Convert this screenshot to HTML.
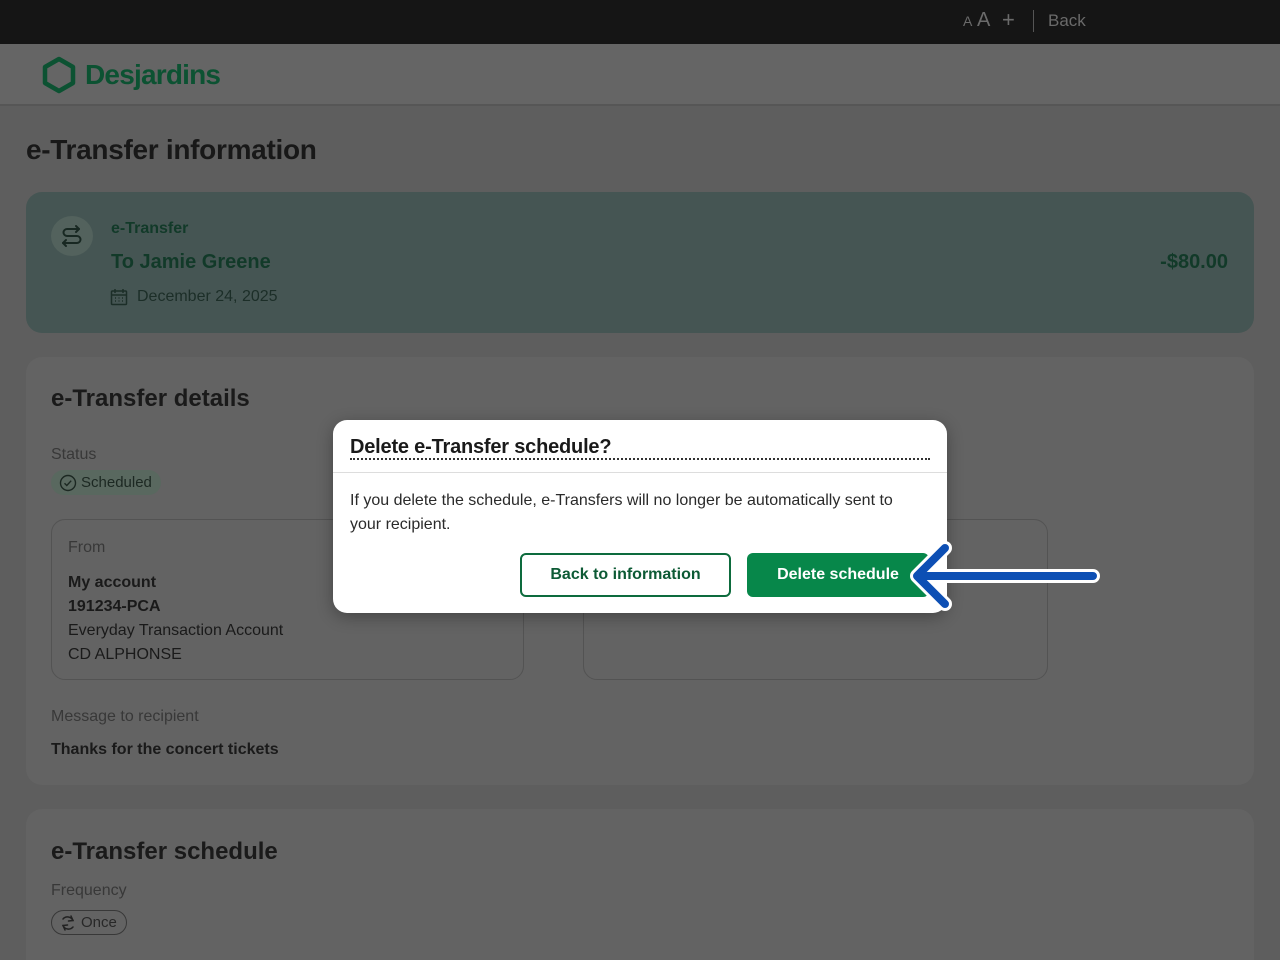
<!DOCTYPE html>
<html><head><meta charset="utf-8"><style>
*{box-sizing:border-box;margin:0;padding:0}
html,body{width:1280px;height:960px;overflow:hidden}
body{background:#5e5e5e;font-family:"Liberation Sans",sans-serif;color:#1a1a1a;position:relative}
.top{height:44px;background:#151515;position:relative}
.top span{position:absolute;color:#6a6a6a}
.hdr{height:62px;background:#656565;border-bottom:2px solid #565656;position:relative}
.logo{position:absolute;left:41px;top:56px}
h1{position:absolute;left:26px;top:134px;font-size:28px;font-weight:bold;color:#181818;letter-spacing:-0.3px}
.tcard{position:absolute;left:26px;top:192px;width:1228px;height:141px;background:#455553;border-radius:16px}
.card{position:absolute;left:26px;background:#636363;border-radius:16px;width:1228px}
.abs{position:absolute;white-space:nowrap}
.g{color:#123a29}
.lbl{color:#383838;font-size:16px}
.box{position:absolute;border:1px solid #535353;border-radius:14px}
.modal{position:absolute;left:333px;top:420px;width:614px;height:193px;background:#fff;border-radius:14px;box-shadow:0 4px 16px rgba(0,0,0,.3)}
.btn{position:absolute;top:133px;height:44px;border-radius:6px;font-weight:bold;font-size:16px;display:flex;align-items:center;justify-content:center}
</style></head><body>
<div class="top">
<span style="left:963px;top:13px;font-size:14px">A</span><span style="left:977px;top:9px;font-size:20px">A</span>
<span style="left:1002px;top:7px;font-size:22px">+</span>
<div style="position:absolute;left:1033px;top:10px;width:1px;height:22px;background:#555"></div>
<span style="left:1048px;top:11px;font-size:17px">Back</span>
</div>
<div class="hdr"></div>
<svg class="logo" width="36" height="38" viewBox="0 0 36 38"><polygon points="18,3 32,11 32,27 18,35 4,27 4,11" fill="none" stroke="#0c5232" stroke-width="4.5" stroke-linejoin="round"/></svg>
<div class="abs" style="left:85px;top:59px;font-size:28px;font-weight:bold;color:#0c5232;letter-spacing:-0.8px">Desjardins</div>
<h1>e-Transfer information</h1>
<div class="tcard">
<div style="position:absolute;left:25px;top:24px;width:42px;height:40px;border-radius:50%;background:#53625d"></div>
<svg style="position:absolute;left:33px;top:32px" width="26" height="26" viewBox="0 0 26 26" fill="none" stroke="#182822" stroke-width="2" stroke-linecap="round" stroke-linejoin="round"><path d="M20 5H8a3.5 3.5 0 0 0 0 7h10a3.5 3.5 0 0 1 0 7H4"/><path d="M17 2l3 3-3 3M7 16l-3 3 3 3"/></svg>
<div class="abs g" style="left:85px;top:28px;font-size:16px;font-weight:bold">e-Transfer</div>
<div class="abs g" style="left:85px;top:59px;font-size:20px;font-weight:bold">To Jamie Greene</div>
<svg style="position:absolute;left:84px;top:96px" width="18" height="18" viewBox="0 0 18 18" fill="none" stroke="#1c2e28" stroke-width="1.5"><rect x="1.5" y="3" width="15" height="13.5" rx="1"/><path d="M1.5 7h15M5 1v4M13 1v4M5 10h1M8.5 10h1M12 10h1M5 13h1M8.5 13h1M12 13h1"/></svg>
<div class="abs" style="left:111px;top:96px;font-size:16px;color:#1c2e28">December 24, 2025</div>
<div class="abs g" style="right:26px;top:59px;font-size:20px;font-weight:bold">-$80.00</div>
</div>
<div class="card" style="top:357px;height:428px">
<div class="abs" style="left:25px;top:28px;font-size:24px;font-weight:bold">e-Transfer details</div>
<div class="abs lbl" style="left:25px;top:89px">Status</div>
<div style="position:absolute;left:25px;top:113px;width:110px;height:25px;border-radius:13px;background:#59685f"></div>
<svg style="position:absolute;left:33px;top:117px" width="18" height="18" viewBox="0 0 18 18" fill="none" stroke="#1c2822" stroke-width="1.4"><circle cx="9" cy="9" r="7.5"/><path d="M5.5 9.2l2.3 2.3 4.4-4.8"/></svg>
<div class="abs" style="left:55px;top:117px;font-size:15px;color:#1c2822">Scheduled</div>
<div class="box" style="left:25px;top:162px;width:473px;height:161px">
<div class="abs lbl" style="left:16px;top:19px">From</div>
<div class="abs" style="left:16px;top:51px;font-size:16px;font-weight:bold;line-height:24px;white-space:normal;width:300px">My account<br>191234-PCA</div>
<div class="abs" style="left:16px;top:99px;font-size:16px;line-height:24px;white-space:normal;width:300px">Everyday Transaction Account<br>CD ALPHONSE</div>
</div>
<div class="box" style="left:557px;top:162px;width:465px;height:161px"></div>
<div class="abs lbl" style="left:25px;top:351px">Message to recipient</div>
<div class="abs" style="left:25px;top:384px;font-size:16px;font-weight:bold">Thanks for the concert tickets</div>
</div>
<div class="card" style="top:809px;height:170px">
<div class="abs" style="left:25px;top:29px;font-size:24px;font-weight:bold">e-Transfer schedule</div>
<div class="abs lbl" style="left:25px;top:73px">Frequency</div>
<div style="position:absolute;left:25px;top:101px;width:76px;height:25px;border-radius:13px;border:1px solid #383838"></div>
<svg style="position:absolute;left:33px;top:105px" width="18" height="18" viewBox="0 0 18 18" fill="none" stroke="#222" stroke-width="1.5" stroke-linecap="round"><path d="M14 6.5A6 6 0 0 0 4 5M4 11.5A6 6 0 0 0 14 13"/><path d="M12 2l2 4.5-4.5.5M6 16l-2-4.5 4.5-.5"/></svg>
<div class="abs" style="left:55px;top:105px;font-size:15px;color:#282828">Once</div>
</div>
<div class="modal">
<div class="abs" style="left:17px;top:16px;font-size:20px;font-weight:bold;color:#1a1a1a;letter-spacing:-0.2px">Delete e-Transfer schedule?</div>
<div style="position:absolute;left:17px;top:38px;width:580px;border-bottom:2px dotted #333"></div>
<div style="position:absolute;left:0;top:52px;width:100%;height:1px;background:#ddd"></div>
<div class="abs" style="left:17px;top:69px;font-size:16px;line-height:24px;white-space:normal;width:560px;color:#2a2a2a">If you delete the schedule, e-Transfers will no longer be automatically sent to your recipient.</div>
<div class="btn" style="left:187px;width:211px;border:2px solid #0d6b3d;color:#0d5a35">Back to information</div>
<div class="btn" style="left:414px;width:182px;background:#07874a;color:#fff">Delete schedule</div>
</div>
<svg style="position:absolute;left:905px;top:540px" width="200" height="75" viewBox="0 0 200 75">
<g fill="none" stroke-linecap="round" stroke-linejoin="round">
<path d="M40 8L12 36L40 64M14 36H188" stroke="#fff" stroke-width="14"/>
<path d="M40 8L12 36L40 64M14 36H188" stroke="#0d4fb4" stroke-width="8"/>
</g></svg>
</body></html>
